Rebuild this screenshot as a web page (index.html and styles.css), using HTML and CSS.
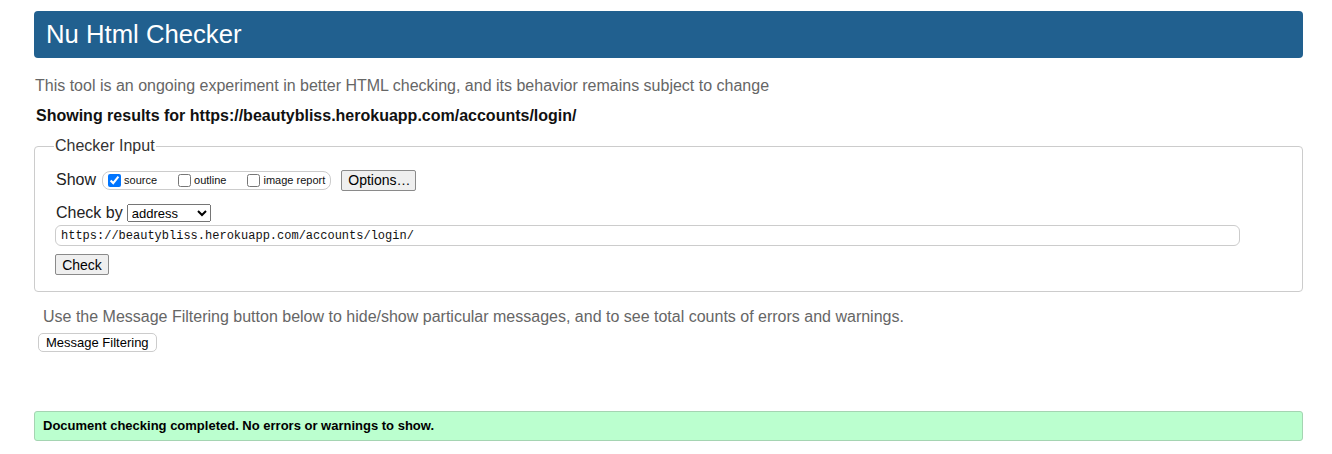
FILE: index.html
```html
<!DOCTYPE html>
<html lang="en">
<head>
<meta charset="utf-8">
<title>Nu Html Checker</title>
<link rel="stylesheet" href="styles.css">
</head>
<body>
<h1 class="title">Nu Html Checker</h1>
<p class="intro">This tool is an ongoing experiment in better HTML checking, and its behavior remains subject to change</p>
<p class="showing">Showing results for https://beautybliss.herokuapp.com/accounts/login/</p>
<fieldset class="input">
  <legend class="legend">Checker Input</legend>
  <div class="row show-row">
    <span class="label">Show</span>
    <span class="group">
      <label class="opt"><input type="checkbox" checked> source</label>
      <label class="opt"><input type="checkbox"> outline</label>
      <label class="opt"><input type="checkbox"> image report</label>
    </span>
    <button class="btn options" type="button">Options…</button>
  </div>
  <div class="row by-row">
    <span class="label">Check by</span>
    <select class="select"><option>address</option></select>
  </div>
  <input class="url" type="text" value="https://beautybliss.herokuapp.com/accounts/login/">
  <div class="row"><button class="btn check" type="button">Check</button></div>
</fieldset>
<p class="filter-note">Use the Message Filtering button below to hide/show particular messages, and to see total counts of errors and warnings.</p>
<button class="filter-btn" type="button">Message Filtering</button>
<div class="success">Document checking completed. No errors or warnings to show.</div>
</body>
</html>
```
FILE: styles.css
```css
html, body { background: #fff; }
body {
  margin: 0;
  padding: 11px 29px 0 34px;
  font-family: "Liberation Sans", Arial, sans-serif;
  color: #000;
}
.title {
  margin: 0;
  height: 47px;
  box-sizing: border-box;
  padding: 7px 12px 0;
  background: #21608f;
  color: #fff;
  font-weight: normal;
  font-size: 25.7px;
  line-height: 32px;
  border-radius: 4px;
}
.intro {
  margin: 18px 0 0 1px;
  font-size: 16px;
  line-height: 20px;
  color: #666;
}
.showing {
  margin: 10px 0 0 2px;
  font-size: 16px;
  line-height: 20px;
  font-weight: bold;
  color: #111;
}
.input {
  margin: 11px 0 0;
  padding: 14px 22px 16px 21px;
  border: 1px solid #ccc;
  border-radius: 4px;
}
.legend {
  padding: 0 1px;
  margin-left: -2px;
  font-size: 16px;
  color: #333;
}
.row { display: flex; align-items: center; }
.label { font-size: 16px; color: #222; }
.show-row { height: 22px; }
.group {
  display: inline-flex;
  align-items: center;
  margin-left: 6px;
  height: 19px;
  box-sizing: border-box;
  padding: 0 5px 0 3px;
  border: 1px solid #ccc;
  border-radius: 8px;
  gap: 19px;
}
.opt {
  display: inline-flex;
  align-items: center;
  font-size: 11px;
  color: #111;
}
.opt input { margin: 0 3px 0 2px; width: 13px; height: 13px; }
.btn {
  font-family: "Liberation Sans", Arial, sans-serif;
  font-size: 13px;
  background: #efefef;
  border: 1px solid #8a8a8a;
  border-radius: 2px;
  padding: 1px 6px;
  color: #000;
}
.options { margin-left: 10px; height: 21px; font-size: 14px; width: 75px; }
.by-row { margin-top: 12px; height: 20px; }
.select {
  margin-left: 4px;
  width: 84px;
  height: 18px;
  font-family: "Liberation Sans", Arial, sans-serif;
  font-size: 13px;
}
.url {
  display: block;
  margin: 2px 0 0 -1px;
  width: 1185px;
  height: 21px;
  box-sizing: border-box;
  padding: 0 5px;
  border: 1px solid #ccc;
  border-radius: 6px;
  font-family: "Liberation Mono", "DejaVu Sans Mono", monospace;
  font-size: 12px;
  color: #111;
}
.check { margin: 8px 0 0 -1px; height: 21px; width: 54px; font-size: 14px; }
.filter-note {
  margin: 15px 0 0 9px;
  font-size: 16px;
  line-height: 20px;
  color: #666;
}
.filter-btn {
  display: block;
  margin: 6px 0 0 4px;
  height: 19px;
  padding: 0 7px;
  background: #fff;
  border: 1px solid #ccc;
  border-radius: 5px;
  font-family: "Liberation Sans", Arial, sans-serif;
  font-size: 13px;
  color: #000;
}
.success {
  margin-top: 59px;
  height: 30px;
  box-sizing: border-box;
  padding: 6px 8px;
  background: #bbffcf;
  border: 1px solid #a5d4b2;
  border-radius: 3px;
  font-weight: bold;
  font-size: 13px;
  line-height: 16px;
  color: #000;
}
```
